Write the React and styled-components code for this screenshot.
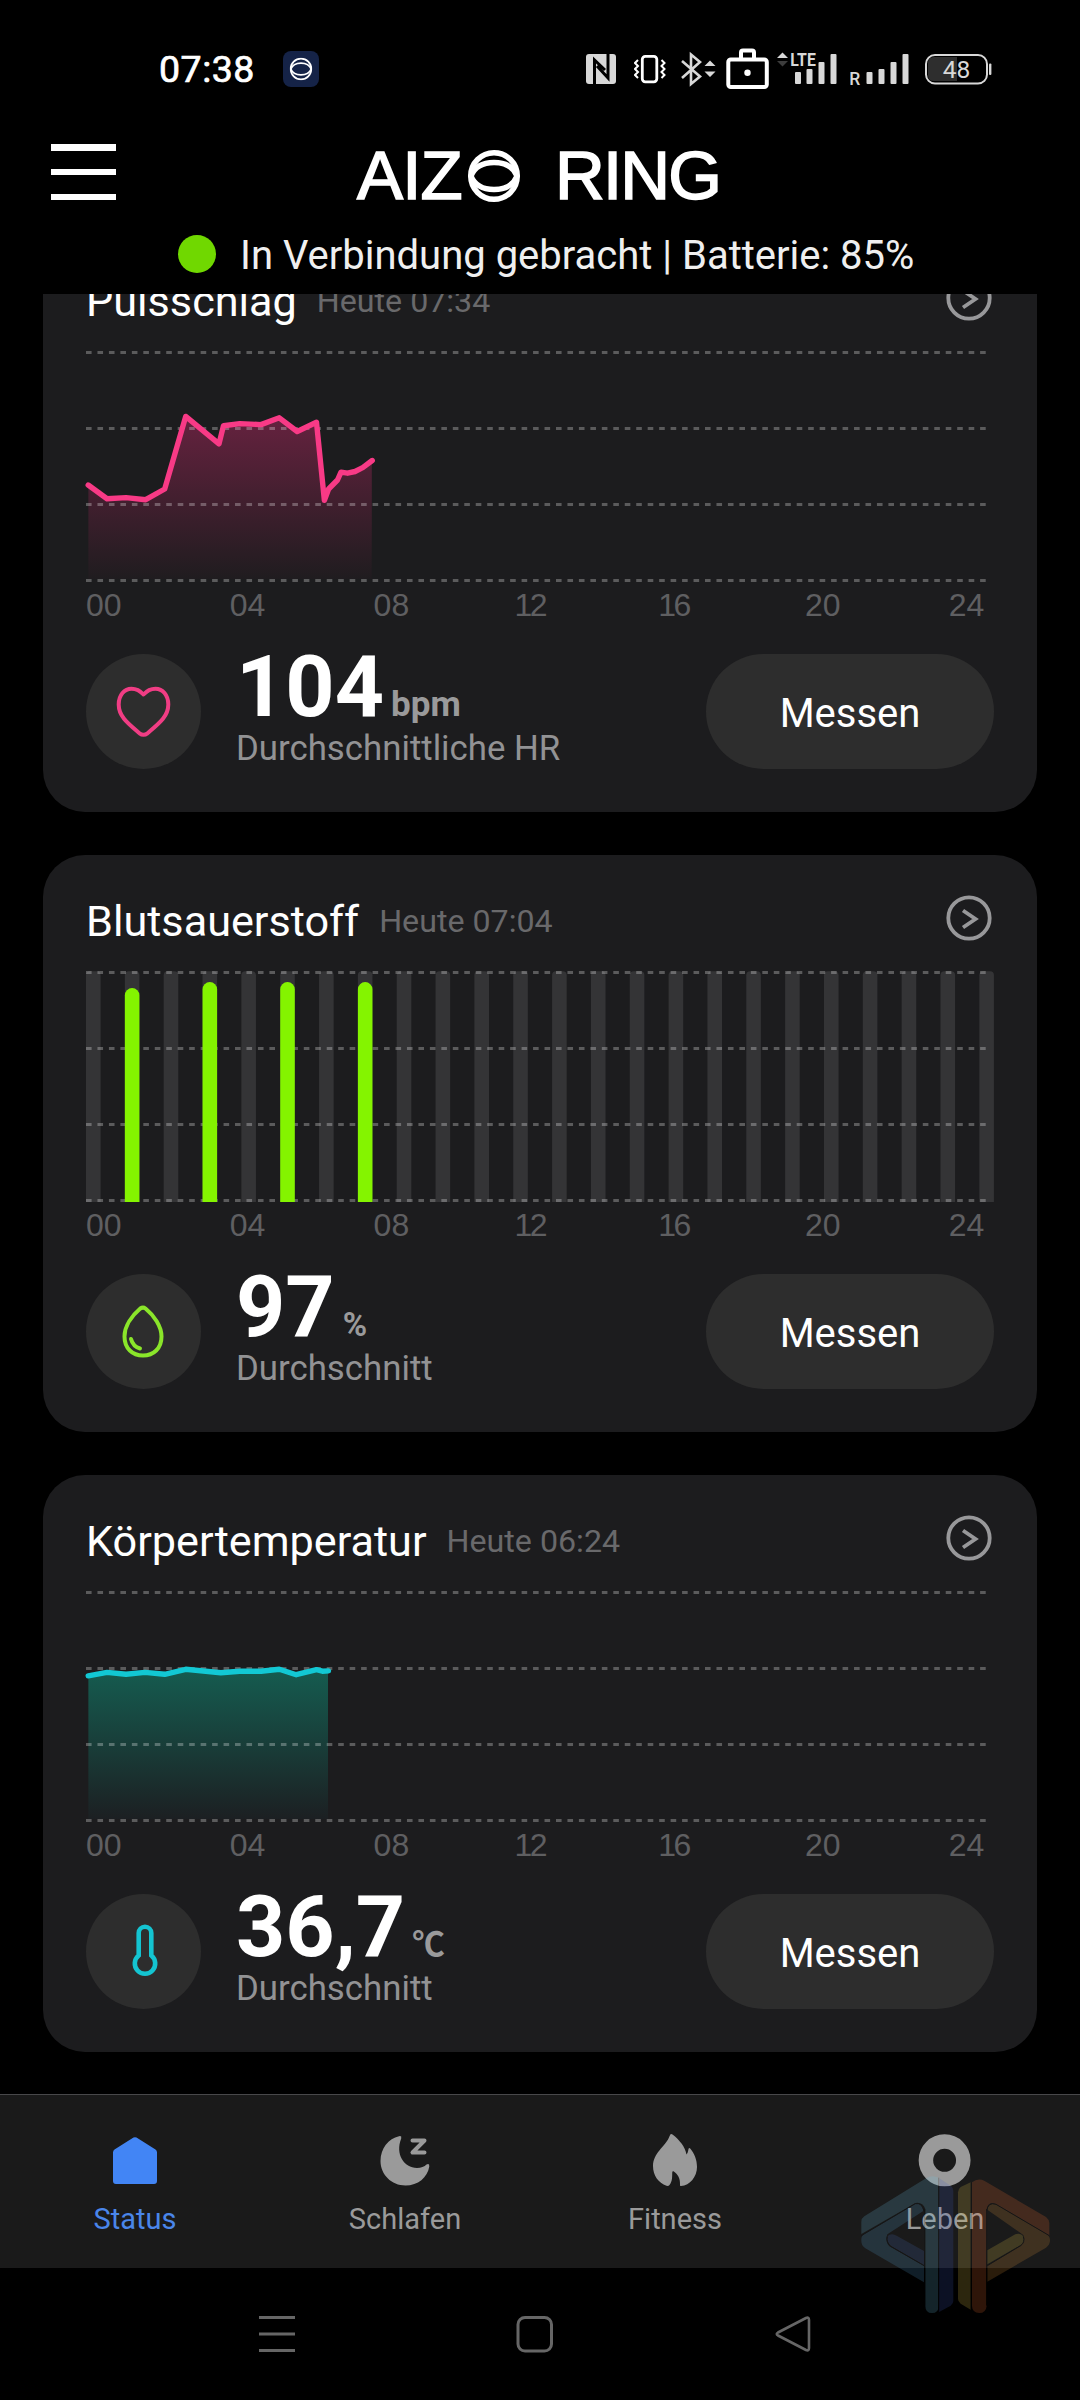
import styled, { createGlobalStyle } from "styled-components";

const GlobalStyle = createGlobalStyle`
body {
  margin: 0;
  background: #000;
  font-family: Roboto, "Noto Sans CJK SC", sans-serif;
}
* { box-sizing: border-box; }
svg { display: block; flex: none; }
`;

const Screen = styled.div`
position: relative;
width: 1080px;
height: 2400px;
overflow: hidden;
display: flex;
flex-direction: column;
background: #000;
`;

const StatusBar = styled.div`
display: flex;
align-items: center;
height: 138px;
padding: 0 88px 0 159px;
`;
const Time = styled.span`
width: 124px;
font-size: 37.5px;
font-weight: 400;
letter-spacing: 0.5px;
color: #fff;
-webkit-text-stroke: 0.7px #fff;
`;
const SystemIcons = styled.div`
display: flex;
margin-left: auto;
`;

const TitleRow = styled.div`
display: flex;
align-items: center;
height: 76px;
padding-left: 51px;
`;
const Burger = styled.div`
display: flex;
flex-direction: column;
justify-content: space-between;
width: 65px;
height: 56px;
margin-bottom: 8px;
`;
const BurgerLine = styled.span`
height: 6.5px;
background: #fff;
`;
const Brand = styled.h1`
display: flex;
align-items: center;
margin: 0 0 0 241px;
font: 400 69px/76px "Liberation Sans", Arial, sans-serif;
color: #fff;
-webkit-text-stroke: 1.6px #fff;
`;
const BrandPart = styled.span`
width: ${(p) => p.$width}px;
margin-left: ${(p) => p.$gap || 0}px;
letter-spacing: ${(p) => p.$spacing || 0}px;
white-space: nowrap;
`;
const Connection = styled.div`
display: flex;
align-items: center;
height: 80px;
padding-left: 177.5px;
font-size: 40px;
color: #efefef;
white-space: nowrap;
`;
const ConnectionText = styled.span`
padding-top: 3px;
`;
const Dot = styled.span`
width: 38px;
height: 38px;
margin-right: 24.5px;
border-radius: 50%;
background: #70d800;
`;

const Feed = styled.main`
display: flex;
flex-direction: column;
gap: 43px;
height: 1800px;
padding: 0 43px;
overflow: hidden;
`;
const Card = styled.section`
flex: none;
height: 577px;
padding: 43px;
border-radius: 42px;
background: #1c1c1e;

&:first-child { margin-top: -59px; }
`;
const CardHeader = styled.div`
display: flex;
align-items: center;
height: 47px;
`;
const CardTitle = styled.h2`
margin: 0 20px 0 0;
font-size: 43.2px;
font-weight: 400;
color: #fff;
`;
const Updated = styled.span`
margin-right: auto;
padding-bottom: 1px;
font-size: 32.2px;
color: #69696b;
`;
const More = styled.svg`
margin: 0 2px 8px 0;
`;
const Chart = styled.svg`
margin-top: 25px;
overflow: visible;
`;
const Axis = styled.div`
display: grid;
grid-template-columns: repeat(7, 143.8px);
width: 908px;
margin-top: 2px;
font: 32px/37px "Liberation Sans", Arial, sans-serif;
color: #5f5f61;
`;
const Hour = styled.span`
letter-spacing: ${(p) => (p.$narrow ? -2.4 : 0)}px;
margin-left: ${(p) => (p.$narrow ? -3 : 0)}px;
`;
const CardFooter = styled.div`
display: flex;
height: 115px;
margin-top: 30px;
`;
const IconCircle = styled.div`
width: 115px;
height: 115px;
margin-right: 35px;
border-radius: 50%;
background: #2d2d2d;
`;
const Reading = styled.div`
display: flex;
flex-direction: column;
gap: 7px;
`;
const Value = styled.div`
display: flex;
align-items: baseline;
height: 66px;
font-size: 86px;
font-weight: 700;
line-height: 66px;
color: #fff;
`;
const Unit = styled.span`
margin-left: ${(p) => p.$gap}px;
font-size: ${(p) => p.$size}px;
color: #9a9a9b;
`;
const Caption = styled.div`
font-size: 34.8px;
line-height: 42px;
color: #929294;
`;
const Measure = styled.button`
width: 288px;
height: 115px;
margin-left: auto;
padding: 3px 0 0;
border: 0;
border-radius: 58px;
background: #2d2d2d;
font: 400 40px Roboto, sans-serif;
color: #fff;
`;

const TabBar = styled.nav`
display: grid;
grid-template-columns: repeat(4, 1fr);
flex: none;
height: 174px;
border-top: 1px solid #48484a;
background: #1a1a1a;
`;
const Tab = styled.a`
display: flex;
flex-direction: column;
align-items: center;
gap: 12px;
padding-top: 35px;
font-size: 29px;
line-height: 34px;
color: ${(p) => (p.$active ? "#4a86ea" : "#9a9a9a")};
`;
const AndroidNav = styled.div`
display: flex;
justify-content: space-between;
align-items: center;
flex: 1;
padding: 0 268px 0 258px;
`;
const Watermark = styled.svg`
position: absolute;
left: 850px;
top: 2119px;
opacity: 0.18;
`;

const HOURS = ["00", "04", "08", "12", "16", "20", "24"];
const GRID = [2.5, 78.5, 154.5, 230.5];

const PULSE = [
    [2.2, 135], [21, 148.7], [40, 147.6], [59.7, 149.7], [78.7, 139], [99.7, 66.4], [133, 93.9],
    [137.5, 75.7], [153.7, 73.6], [175, 74.6], [193.3, 67.8], [211.2, 81.5], [230.5, 72.2],
    [238.4, 150.4], [242.6, 139], [251.5, 130], [255, 122.2], [261.5, 123.2], [269, 121.5],
    [276.7, 117.7], [286.2, 110.5],
];
const TEMP = [
    [2.2, 85.8], [21, 82.4], [40, 84.3], [59, 82.4], [78.7, 84.3], [99.7, 79.3], [134.8, 82.8],
    [153.7, 81.2], [175, 81.2], [193.3, 79.3], [210.2, 84.7], [230.5, 79.7], [236.4, 81.2],
    [242.5, 80.9],
];
const OXYGEN = { 1: 18, 3: 12, 5: 12, 7: 12 };

function GridLines() {
    return (
        <g stroke="#fff" strokeOpacity="0.28" strokeWidth="3" strokeDasharray="5.6 5.863">
            {GRID.map((y) => (
                <line key={y} x1="0" x2="900" y1={y} y2={y} />
            ))}
        </g>
    );
}

function AreaChart({ id, points, end, color, top, bottom }) {
    const line = points.map((p) => p.join(",")).join(" ");
    return (
        <Chart width="908" height="235">
            <defs>
                <linearGradient id={id} gradientUnits="userSpaceOnUse" x1="0" x2="0" y1={points[5][1]} y2="230">
                    <stop offset="0" stopColor={top} />
                    <stop offset="1" stopColor={bottom} />
                </linearGradient>
                <clipPath id={id + "Clip"}>
                    <rect x="2.2" y="0" width={end - 2.2} height="229" />
                </clipPath>
            </defs>
            <polygon
                points={`2.2,230 ${line} ${end},230`}
                fill={`url(#${id})`}
                clipPath={`url(#${id}Clip)`}
            />
            <GridLines />
            <polyline points={line} fill="none" stroke={color} strokeWidth="5.4" strokeLinecap="round" strokeLinejoin="round" />
        </Chart>
    );
}

// flat bottom, rounded top
const barPath = (x, top, r) =>
    `M${x} 232V${top + r}a${r} ${r} 0 0 1 ${r} ${-r}h${14.6 - 2 * r}a${r} ${r} 0 0 1 ${r} ${r}V232z`;

function BarChart() {
    const bars = [...Array(24).keys()];
    return (
        <Chart width="908" height="235">
            {bars.map((i) => (
                <path key={i} d={barPath(i * 38.84, 1.3, 4)} fill="#343436" />
            ))}
            <GridLines />
            {bars.filter((i) => OXYGEN[i]).map((i) => (
                <path key={i} d={barPath(i * 38.84, OXYGEN[i], 7.3)} fill="#84f400" />
            ))}
        </Chart>
    );
}

function RingMark({ size, stroke }) {
    return (
        <svg width={size} height={size} viewBox="0 0 52 52" fill="none" stroke="#fff" strokeWidth={stroke}>
            <circle cx="26" cy="26" r="23.3" />
            <path d="M3 26C7 16 16 12.5 26 12.5S45 16 49 26C45 36 36 39.5 26 39.5S7 36 3 26z" />
        </svg>
    );
}

function HeartIcon() {
    return (
        <svg width="115" height="115" fill="none" stroke="#f03d84" strokeWidth="4" strokeLinejoin="round">
            <path d="M57.5 40.5C53 35.5 48.5 34.7 45.5 34.7C38.5 34.7 32.7 41 32.7 50.5C32.7 62.5 42 69.5 53.5 79.3Q57.5 82.2 61.5 79.3C73 69.5 82.3 62.5 82.3 50.5C82.3 41 76.5 34.7 69.5 34.7C66.5 34.7 62 35.5 57.5 40.5z" />
        </svg>
    );
}

function DropIcon() {
    return (
        <svg width="115" height="115" fill="none" stroke="#8ae52a" strokeWidth="4" strokeLinecap="round" strokeLinejoin="round">
            <path d="M54.3 34.5Q57 32.7 59.500 34.5C68 41.500 75.500 52 75.500 62.500C75.500 74.500 67.500 81.500 57 81.500S38.500 74.500 38.500 62.500C38.500 52 46 41.500 54.300 34.500z" />
            <path d="M45 65Q47 72.500 54 74.500" />
        </svg>
    );
}

function ThermoIcon() {
    return (
        <svg width="115" height="115" fill="none" stroke="#14c4d1" strokeWidth="4.6">
            <path d="M52.700 61.500V39a6.300 6.300 0 0 1 12.600 0V61.500a10.200 10.200 0 1 1 -12.600 0z" />
        </svg>
    );
}

const METRICS = [
    {
        title: "Pulsschlag",
        time: "Heute 07:34",
        chart: <AreaChart id="pulse" points={PULSE} end={285.8} color="#f83a86" top="#66223f" bottom="#1f1c1f" />,
        icon: <HeartIcon />,
        value: "104",
        unit: "bpm",
        unitSize: 35,
        unitGap: 7,
        caption: "Durchschnittliche HR",
    },
    {
        title: "Blutsauerstoff",
        time: "Heute 07:04",
        chart: <BarChart />,
        icon: <DropIcon />,
        value: "97",
        unit: "%",
        unitSize: 33,
        unitGap: 8,
        caption: "Durchschnitt",
    },
    {
        title: "Körpertemperatur",
        time: "Heute 06:24",
        chart: <AreaChart id="temp" points={TEMP} end={242} color="#12c8d4" top="#155c50" bottom="#1c1f22" />,
        icon: <ThermoIcon />,
        value: "36,7",
        unit: "℃",
        unitSize: 32.5,
        unitGap: 7,
        caption: "Durchschnitt",
    },
];

function MetricCard({ metric }) {
    return (
        <Card>
            <CardHeader>
                <CardTitle>{metric.title}</CardTitle>
                <Updated>{metric.time}</Updated>
                <More width="46" height="46" fill="none" stroke="#98989a" strokeWidth="3.8">
                    <circle cx="23" cy="23" r="20.7" />
                    <path d="M17 15.5L29.5 24L17 32.5" />
                </More>
            </CardHeader>
            {metric.chart}
            <Axis>
                {HOURS.map((h) => (
                    <Hour key={h} $narrow={h[0] === "1"}>{h}</Hour>
                ))}
            </Axis>
            <CardFooter>
                <IconCircle>{metric.icon}</IconCircle>
                <Reading>
                    <Value>
                        {metric.value}
                        <Unit $size={metric.unitSize} $gap={metric.unitGap}>{metric.unit}</Unit>
                    </Value>
                    <Caption>{metric.caption}</Caption>
                </Reading>
                <Measure>Messen</Measure>
            </CardFooter>
        </Card>
    );
}

function StatusIcons() {
    return (
        <SystemIcons>
            <svg width="48" height="48" viewBox="586 45 48 48">
                <rect x="586" y="54" width="30" height="30" rx="3" fill="#d8d8d8" />
                <path d="M594.5 84V60L605 70M597 66L608 78V54" fill="none" stroke="#000" strokeWidth="3" />
            </svg>
            <svg width="47" height="48" viewBox="634 45 47 48" fill="none" stroke="#fff">
                <rect x="642.3" y="56.3" width="14.5" height="25.5" rx="3" strokeWidth="2.8" />
                <path d="M638 60l-3 3 3 3-3 3 3 3-3 3 3 3M661.5 60l3 3-3 3 3 3-3 3 3 3-3 3" strokeWidth="2" />
            </svg>
            <svg width="45" height="48" viewBox="681 45 45 48">
                <path d="M682 61L700 76.5L691 84V54.5L700 62L682 78" fill="none" stroke="#d8d8d8" strokeWidth="2.6" />
                <path d="M704.5 66h11l-5.5-5.5zM704.5 71.5h11l-5.5 5.5z" fill="#d8d8d8" />
            </svg>
            <svg width="51" height="48" viewBox="726 45 51 48" fill="none" stroke="#fff" strokeWidth="4">
                <rect x="728.3" y="59.5" width="38.5" height="27.5" rx="2.5" />
                <path d="M741 59V52.5q0-2 2-2h9q2 0 2 2V59" />
                <circle cx="747.5" cy="72.7" r="3.2" fill="#fff" stroke="none" />
            </svg>
            <svg width="73" height="48" viewBox="777 45 73 48" fill="#d8d8d8">
                <path d="M777 58h11l-5.5-5.5z" />
                <path d="M777 61h11l-5.5 5.5z" fill="#3c3c3c" />
                <text x="790.3" y="65.8" fontSize="17.5" fontWeight="700" textLength="25.5" lengthAdjust="spacingAndGlyphs">LTE</text>
                <rect x="795" y="72" width="6" height="12" rx="1" />
                <rect x="806.5" y="69" width="6" height="15" rx="1" />
                <rect x="818.5" y="62" width="6" height="22" rx="1" />
                <rect x="830.5" y="54" width="6" height="30" rx="1" />
            </svg>
            <svg width="75" height="48" viewBox="850 45 75 48" fill="#d8d8d8">
                <text x="849.3" y="85" fontSize="17.5" fontWeight="500">R</text>
                <rect x="866.5" y="72" width="6" height="12" rx="1" />
                <rect x="878.5" y="69" width="6" height="15" rx="1" />
                <rect x="890.5" y="62" width="6" height="22" rx="1" />
                <rect x="902.5" y="54" width="6" height="30" rx="1" />
            </svg>
            <svg width="67" height="48" viewBox="925 45 67 48">
                <path d="M957 57H934q-6 0-6 6v12q0 6 6 6h23z" fill="#2e2e2e" />
                <rect x="926" y="55" width="61" height="28.5" rx="9" fill="none" stroke="#d8d8d8" strokeWidth="2" />
                <rect x="989" y="63.5" width="2.4" height="11.5" rx="1" fill="#d8d8d8" />
                <text x="956.5" y="77.8" fontSize="24.5" textAnchor="middle" fill="#d8d8d8">48</text>
            </svg>
        </SystemIcons>
    );
}

export default function App() {
    return (
        <Screen>
            <GlobalStyle />
            <StatusBar>
                <Time>07:38</Time>
                <svg width="36" height="36" viewBox="0 0 36 36">
                    <rect width="36" height="36" rx="8" fill="#152347" />
                    <g transform="translate(6.5 6.5)">
                        <RingMark size={23} stroke={4} />
                    </g>
                </svg>
                <StatusIcons />
            </StatusBar>
            <TitleRow>
                <Burger>
                    <BurgerLine />
                    <BurgerLine />
                    <BurgerLine />
                </Burger>
                <Brand>
                    <BrandPart $width={111} $spacing={-0.8}>AIZ</BrandPart>
                    <RingMark size={52} stroke={5.4} />
                    <BrandPart $width={170} $gap={35} $spacing={-1.9}>RING</BrandPart>
                </Brand>
            </TitleRow>
            <Connection>
                <Dot />
                <ConnectionText>In Verbindung gebracht | Batterie: 85%</ConnectionText>
            </Connection>
            <Feed>
                {METRICS.map((m) => (
                    <MetricCard key={m.title} metric={m} />
                ))}
            </Feed>
            <TabBar>
                <Tab $active>
                    <svg width="56" height="60" viewBox="0 0 56 60" fill="#4285f5">
                        <path d="M26.5 7.6Q28 6.7 29.5 7.6L48.5 19.6Q50 20.5 50 22.5V51Q50 54 47 54H9Q6 54 6 51V22.5Q6 20.5 7.5 19.6z" />
                    </svg>
                    Status
                </Tab>
                <Tab>
                    <svg width="56" height="60" viewBox="0 0 56 60" fill="#9a9a9a">
                        <path d="M22 6.2Q25 5.5 24.2 8.5C18 24 27 38 40 38C44 38 47.5 36.5 49.5 34.5Q52.5 33 52.3 36.5C50.5 47.5 41 55.5 28.5 55.5C14.5 55.5 3.5 44.5 3.5 31C3.5 18.5 11.5 8.5 22 6.2z" />
                        <path d="M35.5 10.5H47.5L35.5 22.5H47.5" fill="none" stroke="#9a9a9a" strokeWidth="4" strokeLinecap="round" strokeLinejoin="round" />
                    </svg>
                    Schlafen
                </Tab>
                <Tab>
                    <svg width="56" height="60" viewBox="0 0 56 60" fill="#9a9a9a">
                        <path d="M23.5 4.3Q24.5 3.6 25.5 4.5C32.5 10 38 16.5 39.5 24.5C40.5 23.5 41.2 21 41.5 19Q42 17.5 43.2 18.5C47.5 23.5 50 30 50 37C50 46.5 43 55.5 34 56Q32.5 56 33 54.5C33.3 48.5 31 44.5 26.5 41.3Q25.5 40.8 25.3 42C25 46 25.8 51 22.5 55Q21.5 56.3 19.5 55.8C11.5 53 6 45.5 6 36C6 23.5 18 16 21.5 8.5Q22.5 6 23.5 4.3z" />
                    </svg>
                    Fitness
                </Tab>
                <Tab>
                    <svg width="56" height="60" viewBox="0 0 56 60" fill="none" stroke="#9a9a9a">
                        <circle cx="27.6" cy="30.3" r="18.7" strokeWidth="14.5" />
                    </svg>
                    Leben
                </Tab>
            </TabBar>
            <AndroidNav>
                <svg width="38" height="38" viewBox="0 0 38 38" stroke="#666" strokeWidth="3">
                    <path d="M1 2.5H37M1 19H37M1 35.5H37" />
                </svg>
                <svg width="38" height="38" viewBox="0 0 38 38" fill="none" stroke="#666" strokeWidth="3">
                    <rect x="2" y="2.5" width="33.5" height="33.5" rx="7" />
                </svg>
                <svg width="38" height="38" viewBox="0 0 38 38" fill="none" stroke="#666" strokeWidth="2.6" strokeLinejoin="round">
                    <path d="M32 3Q35 1.8 35 5V33Q35 36.2 32 35L4 20.5Q1.5 19 4 17.5z" />
                </svg>
            </AndroidNav>
            <Watermark width="210" height="210" viewBox="0 0 630 630">
                <path d="M34 345V308Q34 298 43 292L228 178Q246 166 266 176V560Q266 582 246 582Q226 582 226 560V270Q218 248 196 252z" fill="#6ec8ea" />
                <path d="M34 360Q34 350 44 344L196 254Q216 250 220 276L112 346Q104 366 118 382L222 440V490L46 388Q34 380 34 366z" fill="#5aa8dc" />
                <path d="M112 352Q124 340 140 350L222 396V438L122 380Q108 368 112 352z" fill="#4a70c0" />
                <path d="M268 178L302 200Q310 206 310 216V546Q310 554 302 560L266 580z" fill="#4460c8" />
                <path d="M362 190V572L332 554Q324 548 324 540V220Q324 210 332 204z" fill="#f0d250" />
                <path d="M366 190Q384 176 404 186L588 294Q598 302 598 312V350L436 254Q414 246 410 272V560Q408 582 388 582Q366 580 366 560z" fill="#ff7434" />
                <path d="M412 272Q416 248 438 256L590 346Q600 352 600 364Q600 378 588 386L412 488V440L512 380Q528 366 520 348z" fill="#e89a3c" />
                <path d="M412 394L496 346Q512 340 520 352Q526 368 512 378L412 436z" fill="#f0d250" />
                <path d="M34 350L196 254Q216 250 222 276M112 352Q108 370 122 382L222 440M266 176V580M364 190V570M598 350L438 256Q414 248 410 276M520 352Q526 370 512 380L412 440M224 270V560M410 270V560" fill="none" stroke="#000" strokeWidth="3" />
            </Watermark>
        </Screen>
    );
}
